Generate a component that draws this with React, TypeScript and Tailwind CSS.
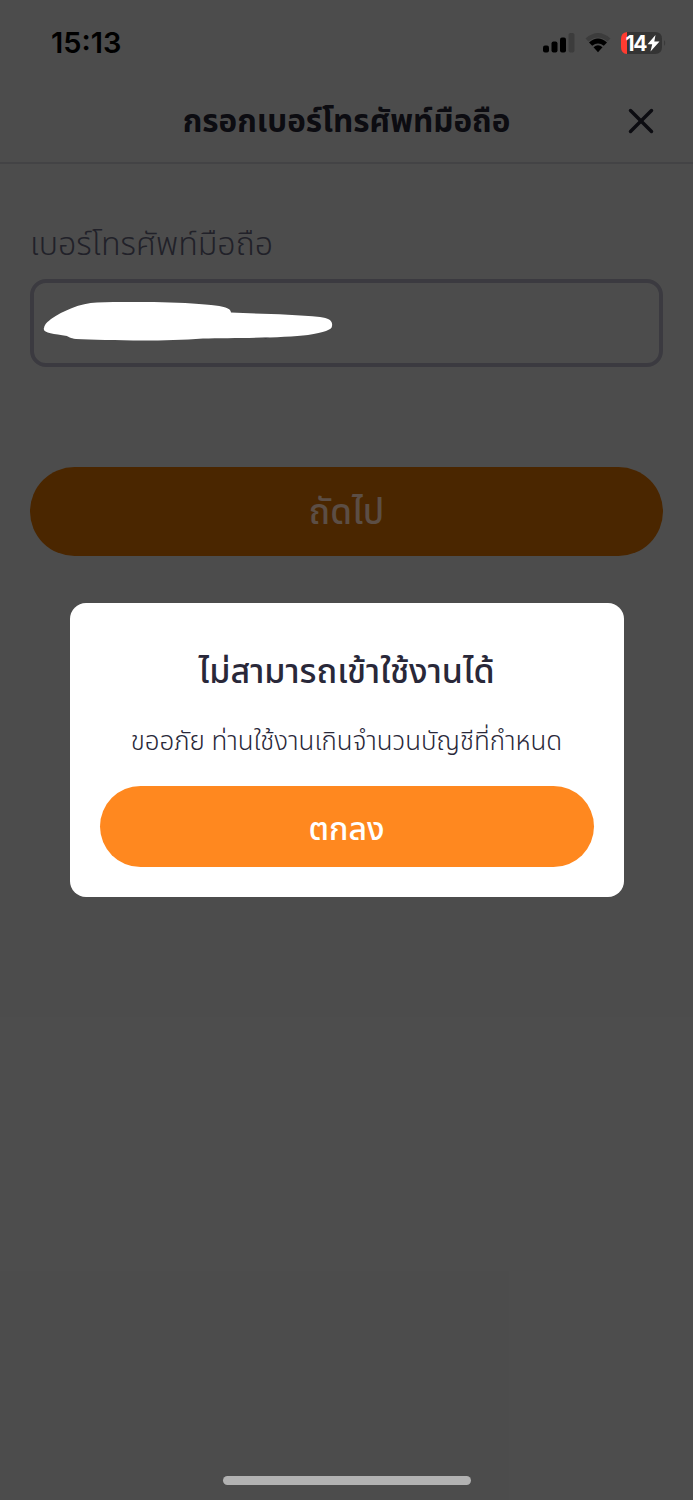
import { X } from "lucide-react";

const thaiFont = "font-['Noto_Sans_Thai','Noto_Sans',Inter,sans-serif]";

function StatusBar() {
  return (
    <div className="relative z-20 flex h-[80px] items-start justify-between pt-[26px] pr-[26px] pl-[51px]">
      <span className="font-[Inter,sans-serif] text-[29px] leading-[34px] font-semibold text-black">15:13</span>
      <div className="flex items-center pt-1">
        <svg width="32" height="26" viewBox="0 0 32 26">
          <rect x="0" y="15.500" width="6" height="7" rx="2" />
          <rect x="8.500" y="11.500" width="6" height="11" rx="2" />
          <rect x="17" y="7.500" width="6" height="15" rx="2" />
          <rect x="25.500" y="3" width="6" height="19.500" rx="2" fill="#3c3c3c" />
        </svg>
        <svg className="ml-[10px]" width="26" height="26" viewBox="0 0 26 26" fill="none">
          <path d="M0.500 8.500Q13 -2.500 25.500 8.500L22.500 11.500Q13 3.500 3.500 11.500Z" fill="#3c3c3c" />
          <path d="M4 12.500Q13 4.500 22 12.500L18.800 15.800Q13 11 7.200 15.800Z" fill="black" />
          <path d="M8.500 17.200Q13 13.500 17.500 17.200L13 22.300Z" fill="black" />
        </svg>
        <svg className="ml-[10px]" width="46" height="26" viewBox="0 0 46 26">
          <path d="M6 2H34Q41 2 41 9V17Q41 24 34 24H6Z" fill="#343434" />
          <path d="M6 2Q0 2.500 0 9V17Q0 23.500 6 24Z" fill="#ff3b30" />
          <path d="M43 10Q45.500 13 43 16Z" fill="#3a3a3a" />
          <text x="4.500" y="20.500" fontFamily="Inter" fontSize="21" fontWeight="700" fill="white" textLength="22">
            14
          </text>
          <path d="M34.500 5L26.500 14.300H31.200L29.500 21.500L38.500 11.500H33.300Z" fill="white" />
        </svg>
      </div>
    </div>
  );
}

function PhoneField() {
  return (
    <div className="px-[30px] pt-[60px]">
      <label className="block h-[55px] pt-px text-[32.2px] leading-[40px] font-light whitespace-nowrap text-[#70708a]">
        เบอร์โทรศัพท์มือถือ
      </label>
      <div className="h-[88px] rounded-[16px] border-4 border-[#c6c4d6] pt-[19px] pl-[9px]">
        {/* scribble hiding the number */}
        <svg className="relative z-20" width="292" height="42" viewBox="0 0 292 42" fill="white">
          <path d="M219 35.500Q224 37 227 35Z" fill="#111118" />
          <path d="M1 26C2 21 5 20 8 17C20 9 37 1 54 0.500C90 -1 140 0 168 3C180 4 188 6 188 10.500C215 12 250 12 277 15C286 16 290 19 289 24C289 28 281 30 265 33C242 36 190 36 160 36.500C115 40 60 38 33 37C27 36 26 35 24 34C10 32 -1 31 1 26Z" />
        </svg>
      </div>
    </div>
  );
}

function Dialog() {
  return (
    <div className="absolute inset-0 z-10 flex items-start justify-center bg-black/70 pt-[603px]">
      <div className="flex h-[294px] w-[554px] flex-col items-center rounded-[16px] bg-white px-[30px] text-[#292839]">
        <h2 className="mt-[45px] h-[50px] text-[34px] leading-[50px] font-medium whitespace-nowrap">
          ไม่สามารถเข้าใช้งานได้
        </h2>
        <p className="mt-[25px] h-[40px] text-[25.9px] leading-[40px] font-light whitespace-nowrap">
          ขออภัย ท่านใช้งานเกินจำนวนบัญชีที่กำหนด
        </p>
        <button className="mt-[23px] h-[81px] w-full rounded-full bg-[#ff881f] pt-[6px] text-[32px] font-medium text-white">
          ตกลง
        </button>
      </div>
    </div>
  );
}

export default function App() {
  return (
    <div className={`relative flex h-[1500px] w-[693px] flex-col overflow-hidden bg-white ${thaiFont}`}>
      <StatusBar />
      <header className="grid h-[84px] grid-cols-[1fr_auto_1fr] items-center border-b-2 border-[#e2e2e6]">
        <h1 className="col-start-2 pt-[4px] text-[31.4px] leading-[44px] font-bold whitespace-nowrap text-[#292839]">
          กรอกเบอร์โทรศัพท์มือถือ
        </h1>
        <X className="mr-[31px] justify-self-end text-[#292839]" size={42} strokeWidth={2} />
      </header>
      <PhoneField />
      <div className="px-[30px] pt-[100px]">
        <button className="h-[89px] w-full rounded-full bg-[#f87f00] pt-[6px] text-[35px] font-medium text-white">
          <span className="relative z-20 text-[#5c4e45]">ถัดไป</span>
        </button>
      </div>
      <div className="relative z-20 mt-auto mb-[15px] h-[9px] w-[248px] self-center rounded-full bg-[#b2b2b2]" />
      <Dialog />
    </div>
  );
}
